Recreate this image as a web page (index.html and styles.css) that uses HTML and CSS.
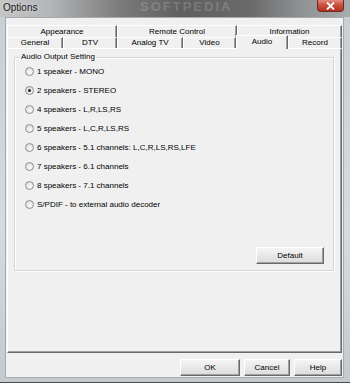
FILE: index.html
```html
<!DOCTYPE html>
<html lang="en">
	<head>
		<meta charset="UTF-8" />
		<title>Options</title>
		<link rel="stylesheet" href="styles.css">
	</head>
	<body>
		<div class="window">
			<div class="titlebar">
				<span class="title">Options</span>
				<span class="watermark">SOFTPEDIA</span>
				<span class="close">
					<svg width="9" height="8" viewBox="0 0 9 8">
						<path d="M1 0.5 L8 7.5 M8 0.5 L1 7.5" stroke="#fff" stroke-width="1.8" />
					</svg>
				</span>
			</div>
			<div class="client">
				<div class="tab-row row-back">
					<div class="tab">Appearance</div>
					<div class="tab">Remote Control</div>
					<div class="tab">Information</div>
				</div>
				<div class="tab-row row-front">
					<div class="tab">General</div>
					<div class="tab">DTV</div>
					<div class="tab">Analog TV</div>
					<div class="tab">Video</div>
					<div class="tab active">Audio</div>
					<div class="tab">Record</div>
				</div>
				<div class="panel">
					<fieldset class="group">
						<legend>Audio Output Setting</legend>
						<ul class="options">
							<li><span class="radio"></span>1 speaker - MONO</li>
							<li><span class="radio checked"></span>2 speakers - STEREO</li>
							<li><span class="radio"></span>4 speakers - L,R,LS,RS</li>
							<li><span class="radio"></span>5 speakers - L,C,R,LS,RS</li>
							<li><span class="radio"></span>6 speakers - 5.1 channels: L,C,R,LS,RS,LFE</li>
							<li><span class="radio"></span>7 speakers - 6.1 channels</li>
							<li><span class="radio"></span>8 speakers - 7.1 channels</li>
							<li><span class="radio"></span>S/PDIF - to external audio decoder</li>
						</ul>
						<div class="group-foot">
							<button class="btn btn-default">Default</button>
						</div>
					</fieldset>
				</div>
				<div class="actions">
					<button class="btn btn-ok">OK</button>
					<button class="btn btn-cancel">Cancel</button>
					<button class="btn btn-help">Help</button>
				</div>
			</div>
		</div>
	</body>
</html>
```

FILE: styles.css
```css
body {
	margin: 0;
	padding: 0;
	background: #3b3b3b;
	font-family: 'Liberation Sans', Arial, sans-serif;
	font-size: 8px;
	color: #000;
}
.window {
	width: 350px;
	height: 383px;
	display: flex;
	flex-direction: column;
	background: linear-gradient(180deg, #c9ced3 0, #d6dbe0 60%, #c4c9ce 100%);
	box-sizing: border-box;
	border-bottom: 1px solid #4a4a4a;
}
.titlebar {
	position: relative;
	height: 17px;
	flex: none;
	background: linear-gradient(90deg, #c3c5c7 0, #b3b5b7 50px, #7b7b7b 120px, #5f5f5f 180px, #6a6a6a 250px, #8e9092 300px, #a9acae 350px);
	overflow: hidden;
}
.title {
	position: absolute;
	left: 3px;
	top: 2px;
	font-size: 10px;
	line-height: 12px;
	color: #1a1a1a;
	text-shadow: 0 0 4px #e8e8e8;
}
.watermark {
	position: absolute;
	left: 140px;
	top: 0;
	font-size: 13px;
	line-height: 14px;
	font-weight: bold;
	letter-spacing: 2px;
	color: rgba(255, 255, 255, 0.18);
}
.close {
	position: absolute;
	right: 6px;
	top: 0;
	width: 27px;
	height: 12px;
	display: flex;
	align-items: center;
	justify-content: center;
	background: linear-gradient(180deg, #e08a7e 0, #c9503f 45%, #b2301e 100%);
	border: 1px solid #6e2a22;
	border-top: none;
	border-radius: 0 0 4px 4px;
	box-sizing: border-box;
}
.client {
	flex: 1;
	display: flex;
	flex-direction: column;
	margin: 0 6px 4px 5px;
	padding: 7px 1px 0 1px;
	background: #f0f0f0;
	border: 1px solid #a3aab0;
}

/* tabs */
.tab-row {
	display: grid;
}
.row-back {
	grid-template-columns: 110px 120px 105px;
	height: 12px;
}
.row-front {
	grid-template-columns: 56px 54px 66px 53px 52px 54px;
	height: 11px;
}
.tab {
	text-align: center;
	line-height: 11px;
	border-top: 1px solid #fff;
	border-left: 1px solid #fff;
	border-right: 1px solid #696969;
	box-shadow: inset -1px 0 0 #a0a0a0;
	background: #f0f0f0;
	white-space: nowrap;
}
.row-front .tab {
	line-height: 10px;
}
.tab.active {
	position: relative;
	z-index: 2;
	margin-top: -2px;
	margin-bottom: -1px;
	line-height: 11px;
}
.panel {
	flex: 1;
	border-top: 1px solid #fff;
	border-left: 1px solid #fff;
	border-right: 1px solid #696969;
	border-bottom: 1px solid #696969;
	box-shadow: inset -1px -1px 0 #a0a0a0;
	padding: 3px 7px 0 6px;
}

/* group box */
.group {
	margin: 0;
	padding: 0 0 6px 0;
	border: 1px solid #d5d5d5;
	box-shadow: inset 1px 1px 0 #fff, 1px 1px 0 #fff;
}
.group legend {
	margin-left: 5px;
	padding: 0 1px;
	line-height: 10px;
	font-size: 8px;
}
.options {
	list-style: none;
	margin: 0;
	padding: 0 0 0 10px;
}
.options li {
	display: flex;
	align-items: center;
	height: 19px;
	white-space: nowrap;
}
.radio {
	width: 9px;
	height: 9px;
	margin-right: 3px;
	border-radius: 50%;
	border: 1px solid #8e8f8f;
	box-sizing: border-box;
	background: radial-gradient(circle at 60% 65%, #fbfbfb 0, #e6e6e6 55%, #cfcfcf 100%);
	display: flex;
	align-items: center;
	justify-content: center;
}
.radio.checked::after {
	content: '';
	width: 3px;
	height: 3px;
	border-radius: 50%;
	background: #1d1d1d;
}
.group-foot {
	display: flex;
	justify-content: flex-end;
	margin-top: 33px;
	padding-right: 9px;
}

/* buttons */
.btn {
	font-family: 'Liberation Sans', Arial, sans-serif;
	font-size: 8px;
	color: #000;
	height: 17px;
	padding: 0;
	background: linear-gradient(180deg, #f5f5f5 0, #e8e8e8 50%, #dcdcdc 100%);
	border: 1px solid #fff;
	border-right-color: #696969;
	border-bottom-color: #696969;
	box-shadow: inset -1px -1px 0 #a0a0a0;
	box-sizing: border-box;
}
.btn-default {
	width: 68px;
}
.actions {
	display: flex;
	justify-content: flex-end;
	gap: 4px;
	margin: 6px 0 1px;
	flex: none;
}
.btn-ok {
	width: 60px;
}
.btn-cancel {
	width: 46px;
}
.btn-help {
	width: 48px;
}
```
